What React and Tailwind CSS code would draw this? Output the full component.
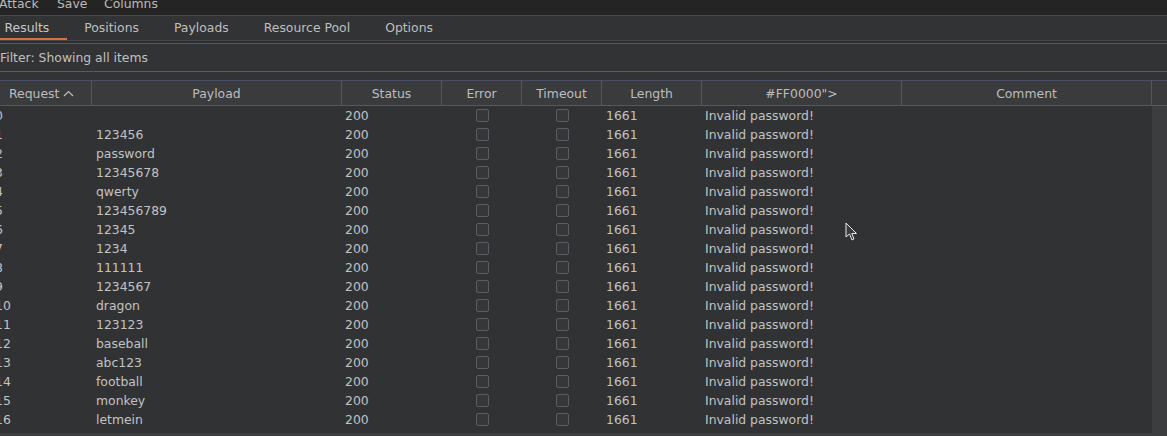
import React from "react";

const cols = [
  { key: "req", label: "Request", w: "w-[92px]" },
  { key: "payload", label: "Payload", w: "w-[250px]" },
  { key: "status", label: "Status", w: "w-[100px]" },
  { key: "error", label: "Error", w: "w-[80px]" },
  { key: "timeout", label: "Timeout", w: "w-[80px]" },
  { key: "length", label: "Length", w: "w-[100px]" },
  { key: "ff", label: '#FF0000">', w: "w-[200px]" },
  { key: "comment", label: "Comment", w: "w-[250px]" },
];

const payloads = [
  "",
  "123456",
  "password",
  "12345678",
  "qwerty",
  "123456789",
  "12345",
  "1234",
  "111111",
  "1234567",
  "dragon",
  "123123",
  "baseball",
  "abc123",
  "football",
  "monkey",
  "letmein",
];

function Box() {
  return <div className="w-[13px] h-[13px] rounded-[2px] border border-[#5c5d60] bg-[#36373a]" />;
}

export default function App() {
  return (
    <div className="relative w-[1167px] h-[436px] overflow-hidden bg-[#3c3d3f] font-['DejaVu_Sans',sans-serif] text-[12.4px] text-[#c2c2c2]">
      {/* menu bar */}
      <div className="h-[16px] bg-[#242424] border-b border-[#4a4a4a] overflow-hidden">
        <div className="flex -mt-[4px] leading-[15px] text-[#bababa]">
          <span className="-ml-[1px] w-[58px]">Attack</span>
          <span className="w-[47px]">Save</span>
          <span>Columns</span>
        </div>
      </div>

      {/* tabs */}
      <div className="h-[24px] bg-[#323335] flex -ml-[13px]">
        {["Results", "Positions", "Payloads", "Resource Pool", "Options"].map((t, i) => (
          <div
            key={t}
            className={`px-[17.5px] flex items-center leading-none pt-[3px] border-b-2 ${
              i === 0 ? "border-[#d9703f] text-[#c8c8c8]" : "border-transparent text-[#bfbfbf]"
            }`}
          >
            {t}
          </div>
        ))}
      </div>
      <div className="h-[4px] bg-[#2e2f31] border-t border-[#474849] border-b border-b-[#5a5a5b]" />

      {/* filter */}
      <div className="h-[28px] bg-[#323335] border-b border-[#5a5a5b] flex items-center leading-none pt-[2px] text-[#c0c0c0]">
        Filter: Showing all items
      </div>
      <div className="h-[8px] bg-[#323335]" />

      {/* header */}
      <div className="flex h-[26px] bg-[#3a3b3d] border-t border-[#4a4f66] border-b border-b-[#58595b] text-[#bdbdbd]">
        {cols.map((c) => (
          <div
            key={c.key}
            className={`${c.w} shrink-0 border-r border-[#55565a] flex items-center leading-none pt-[2px] ${
              c.key === "req" ? "pl-[9px]" : "justify-center"
            }`}
          >
            {c.label}
            {c.key === "req" && (
              <svg width="11" height="7" viewBox="0 0 11 7" className="ml-[4px] -mt-[1px]">
                <path d="M1 6 L5.5 1.5 L10 6" fill="none" stroke="#bdbdbd" strokeWidth="1.2" />
              </svg>
            )}
          </div>
        ))}
      </div>

      {/* rows */}
      <div className="w-[1152px] bg-[#313234] pb-[4px]">
        {payloads.map((p, i) => (
          <div key={i} className="flex h-[19px] items-center leading-none">
            <div className="w-[92px] shrink-0 pt-[2px]">
              <span className="-ml-[5px]">{i}</span>
            </div>
            <div className="w-[250px] shrink-0 pl-[4px] pt-[2px]">{p}</div>
            <div className="w-[100px] shrink-0 pl-[3px] pt-[2px]">200</div>
            <div className="w-[80px] shrink-0 flex justify-center">
              <Box />
            </div>
            <div className="w-[80px] shrink-0 flex justify-center">
              <Box />
            </div>
            <div className="w-[100px] shrink-0 pl-[4px] pt-[2px]">1661</div>
            <div className="w-[200px] shrink-0 pl-[3px] pt-[2px]">Invalid password!</div>
            <div className="w-[250px] shrink-0" />
          </div>
        ))}
      </div>

      {/* mouse pointer */}
      <svg width="16" height="22" viewBox="0 0 16 22" className="absolute left-[845px] top-[222px]">
        <path d="M1 1 L1 15 L4.5 12 L7 18 L9 17 L6.8 11.5 L11.5 11.5 Z" fill="#3b3c40" stroke="#e8e8e8" strokeWidth="1" />
      </svg>
    </div>
  );
}
